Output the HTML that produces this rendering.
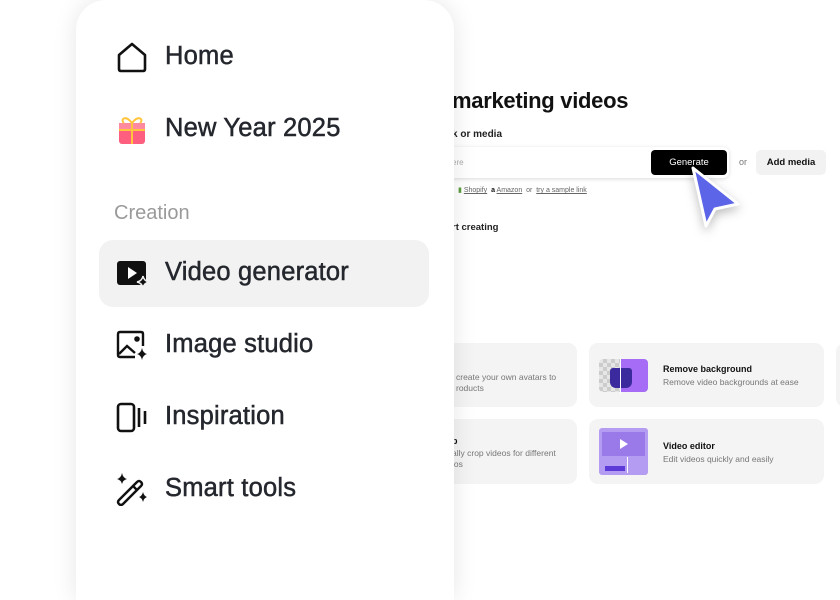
<!DOCTYPE html>
<html><head><style>
*{margin:0;padding:0;box-sizing:border-box}
body{width:840px;height:560px;overflow:hidden;background:#fff;font-family:"Liberation Sans",Arial,sans-serif;position:relative}
.abs{position:absolute}
.panel{left:76px;top:0;width:378px;height:600px;background:#fff;border-radius:30px 30px 0 0;box-shadow:0 0 24px rgba(0,0,0,.10)}
.item{position:absolute;left:0;font-size:25.5px;color:#24272d;-webkit-text-stroke:0.5px #24272d;letter-spacing:.2px}
.item span{position:absolute;left:89px;top:-15px;white-space:nowrap}
.item svg{position:absolute;left:39px;top:-17px}
.card{background:#f4f4f4;border-radius:9px}
.ct{font-size:9px;font-weight:bold;color:#111}
.cd{font-size:8.5px;color:#777}
</style></head><body>
<div class="abs" style="left:452px;top:88px;font-size:22px;font-weight:bold;color:#111;letter-spacing:-.3px">marketing videos</div>
<div class="abs" style="left:452px;top:129px;font-size:10px;font-weight:bold;color:#222">k or media</div>
<div class="abs" style="left:420px;top:147px;width:309px;height:31px;background:#fff;border-radius:6px;box-shadow:0 1px 4px rgba(0,0,0,.15)"></div>
<div class="abs" style="left:452px;top:158px;font-size:8px;color:#aaa">ere</div>
<div class="abs" style="left:651px;top:150px;width:76px;height:25px;background:#000;border-radius:4px;color:#fff;font-size:9.5px;text-align:center;line-height:25px">Generate</div>
<div class="abs" style="left:739px;top:157px;font-size:9px;color:#777">or</div>
<div class="abs" style="left:756px;top:150px;width:70px;height:25px;background:#f2f2f2;border-radius:5px;color:#111;font-size:9.5px;font-weight:bold;text-align:center;line-height:25px">Add media</div>
<div class="abs" style="left:458px;top:186px;font-size:7px;color:#666;white-space:nowrap"><span style="color:#5a9b3b">▮</span> <u>Shopify</u> &nbsp;<b style="color:#111">a</b> <u>Amazon</u> &nbsp;or&nbsp; <u>try a sample link</u></div>
<div class="abs" style="left:452px;top:222px;font-size:9.5px;font-weight:bold;color:#222">rt creating</div>

<div class="abs card" style="left:420px;top:343px;width:157px;height:64px"></div>
<div class="abs cd" style="left:456px;top:372px;line-height:11px">create your own avatars to<br>roducts</div>
<div class="abs card" style="left:589px;top:343px;width:235px;height:64px"></div>
<div class="abs" style="left:599px;top:359px;width:22px;height:33px;background:repeating-conic-gradient(#ccc 0 25%,#e6e6e6 0 50%) 0 0/8px 8px;border-radius:4px 0 0 4px"></div>
<div class="abs" style="left:621px;top:359px;width:27px;height:33px;background:#a66cf5;border-radius:0 4px 4px 0"></div>
<div class="abs" style="left:610px;top:368px;width:22px;height:20px;background:#3b2a9e;border-radius:3px 3px 6px 6px"></div>
<div class="abs" style="left:620px;top:357px;width:1px;height:37px;background:#fff"></div>
<div class="abs ct" style="left:663px;top:364px">Remove background</div>
<div class="abs cd" style="left:663px;top:377px">Remove video backgrounds at ease</div>
<div class="abs card" style="left:836px;top:343px;width:20px;height:64px"></div>

<div class="abs card" style="left:420px;top:419px;width:157px;height:65px"></div>
<div class="abs ct" style="left:452px;top:436px">p</div>
<div class="abs cd" style="left:452px;top:448px;line-height:11px">ally crop videos for different<br>ios</div>
<div class="abs card" style="left:589px;top:419px;width:235px;height:65px"></div>
<div class="abs" style="left:599px;top:428px;width:49px;height:47px;background:#b49cf2;border-radius:3px"></div>
<div class="abs" style="left:602px;top:432px;width:43px;height:24px;background:#9a7ae8"></div>
<div class="abs" style="left:620px;top:439px;width:0;height:0;border-left:8px solid #fff;border-top:5px solid transparent;border-bottom:5px solid transparent"></div>
<div class="abs" style="left:605px;top:466px;width:20px;height:5px;background:#5b3ad8"></div>
<div class="abs" style="left:627px;top:457px;width:1px;height:16px;background:#fff"></div>
<div class="abs ct" style="left:663px;top:441px">Video editor</div>
<div class="abs cd" style="left:663px;top:454px">Edit videos quickly and easily</div>

<svg class="abs" style="left:684px;top:160px;filter:drop-shadow(0 4px 5px rgba(0,0,0,.25))" width="64" height="72" viewBox="0 0 64 72"><path d="M9 8 L54 44 L31 49 L22 66 Z" fill="#5c65e8" stroke="#fff" stroke-width="3" stroke-linejoin="round"/></svg>

<div class="abs panel">
 <div class="item" style="top:57px"><svg width="34" height="34" viewBox="0 0 34 34" fill="none" stroke="#111" stroke-width="2.6" stroke-linejoin="round"><path d="M4 15 L17 4 L30 15 V29 Q30 31 28 31 H6 Q4 31 4 29 Z"/></svg><span>Home</span></div>
 <div class="item" style="top:129px"><svg width="34" height="34" viewBox="0 0 34 34"><rect x="4" y="11" width="26" height="21" rx="3" fill="#ff5f7e"/><rect x="4" y="11" width="26" height="7" fill="#ff8aa0"/><path d="M17 11 V32 M4 18 H30" stroke="#ffc53d" stroke-width="2"/><path d="M17 11 C10 2 5 8 9 11 M17 11 C24 2 29 8 25 11" stroke="#ffc53d" stroke-width="2" fill="none"/></svg><span>New Year 2025</span></div>
 <div class="abs" style="left:38px;top:202px;font-size:20px;color:#9a9a9a">Creation</div>
 <div class="abs" style="left:23px;top:240px;width:330px;height:67px;background:#f2f2f2;border-radius:14px"></div>
 <div class="item" style="top:273px"><svg width="34" height="34" viewBox="0 0 34 34"><rect x="2" y="5" width="29" height="24" rx="3" fill="#111"/><path d="M13 11 L22 17 L13 23 Z" fill="#fff"/><path d="M28 20 Q29 25 34 26 Q29 27 28 32 Q27 27 22 26 Q27 25 28 20Z" fill="#111" stroke="#f2f2f2" stroke-width="1.5"/></svg><span>Video generator</span></div>
 <div class="item" style="top:345px"><svg width="34" height="34" viewBox="0 0 34 34" fill="none" stroke="#111" stroke-width="2.4"><path d="M20 29 H5 Q3 29 3 27 V6 Q3 4 5 4 H26 Q28 4 28 6 V18"/><path d="M4 26 L12 18 L20 25"/><circle cx="22" cy="11" r="1.6" fill="#111"/><path d="M27 20 Q28 25 32 26 Q28 27 27 32 Q26 27 22 26 Q26 25 27 20Z" fill="#111" stroke="none"/></svg><span>Image studio</span></div>
 <div class="item" style="top:417px"><svg width="34" height="34" viewBox="0 0 34 34" fill="none" stroke="#111" stroke-width="2.6"><rect x="3" y="4" width="16" height="27" rx="3"/><path d="M24 8 V27 M30 11 V24"/></svg><span>Inspiration</span></div>
 <div class="item" style="top:489px"><svg width="34" height="34" viewBox="0 0 34 34" fill="none" stroke="#111" stroke-width="2.4"><path d="M4 28 L22 10 Q24 8 26 10 Q28 12 26 14 L8 32 Q6 34 4 32 Q2 30 4 28Z"/><path d="M18 14 L22 18"/><path d="M7 1 Q8 6 12 7 Q8 8 7 12 Q6 8 2 7 Q6 6 7 1Z" fill="#111" stroke="none"/><path d="M28 20 Q29 24 32 25 Q29 26 28 30 Q27 26 24 25 Q27 24 28 20Z" fill="#111" stroke="none"/></svg><span>Smart tools</span></div>
</div>
</body></html>
